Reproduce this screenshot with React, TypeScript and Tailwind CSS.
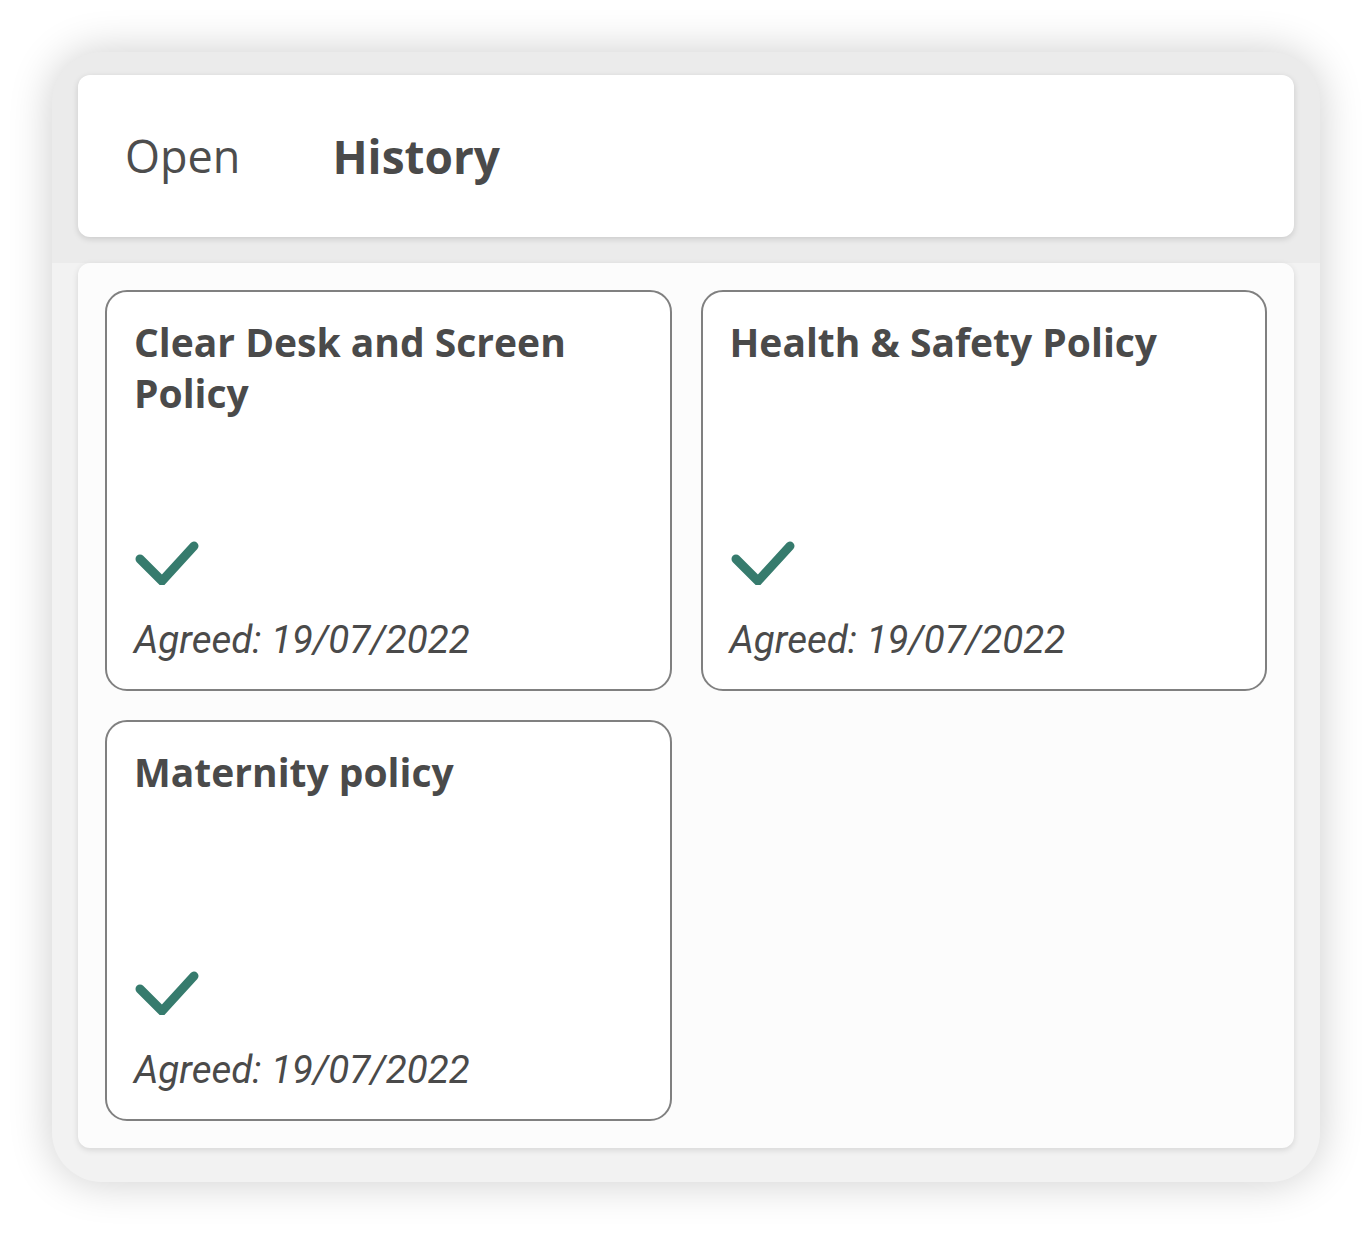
import React from 'react'

const policies = [
  { title: 'Clear Desk and Screen Policy', agreed: '19/07/2022' },
  { title: 'Health & Safety Policy', agreed: '19/07/2022' },
  { title: 'Maternity policy', agreed: '19/07/2022' },
]

function Check() {
  return (
    <svg width="66" height="45" viewBox="0 0 66 45" className="block">
      <polyline
        points="6,19 28,41 60,6"
        fill="none"
        stroke="#367b6d"
        strokeWidth="9"
        strokeLinecap="round"
        strokeLinejoin="miter"
      />
    </svg>
  )
}

function PolicyCard({ title, agreed }: { title: string; agreed: string }) {
  return (
    <div className="flex h-[401px] flex-col justify-between rounded-[22px] border-2 border-[#808080] bg-white px-[27px] pb-[27px] pt-[24px]">
      <h3 className="text-[39px] font-bold leading-[51px] text-[#4a4a4a] [font-family:'Open_Sans',sans-serif]">
        {title}
      </h3>
      <div className="flex flex-col gap-[33px]">
        <Check />
        <p className="text-[38.5px] italic leading-[44px] text-[#4a4a4a] [font-family:Roboto,sans-serif]">
          Agreed: {agreed}
        </p>
      </div>
    </div>
  )
}

export default function App() {
  return (
    <div className="min-h-screen bg-white p-[52px] [font-family:'Open_Sans',sans-serif]">
      <div className="w-[1268px] rounded-[50px] bg-[#ebebeb] pt-[23px] shadow-[0_0_44px_rgba(0,0,0,0.2)]">
        {/* tabs */}
        <div className="mx-[26px] flex h-[162px] items-center gap-[92px] rounded-[12px] bg-white pl-[47px] shadow-[0_2px_6px_rgba(0,0,0,0.14)]">
          <span className="text-[45px] text-[#4d4d4d]">Open</span>
          <span className="text-[46px] font-bold text-[#4a4a4a]">History</span>
        </div>

        {/* content */}
        <div className="mt-[26px] rounded-b-[50px] bg-[#f2f2f2] px-[26px] pb-[34px]">
          <div className="grid grid-cols-2 gap-[29px] rounded-[12px] bg-[#fcfcfc] p-[27px] shadow-[0_2px_6px_rgba(0,0,0,0.12)]">
            {policies.map((p) => (
              <PolicyCard key={p.title} title={p.title} agreed={p.agreed} />
            ))}
          </div>
        </div>
      </div>
    </div>
  )
}
